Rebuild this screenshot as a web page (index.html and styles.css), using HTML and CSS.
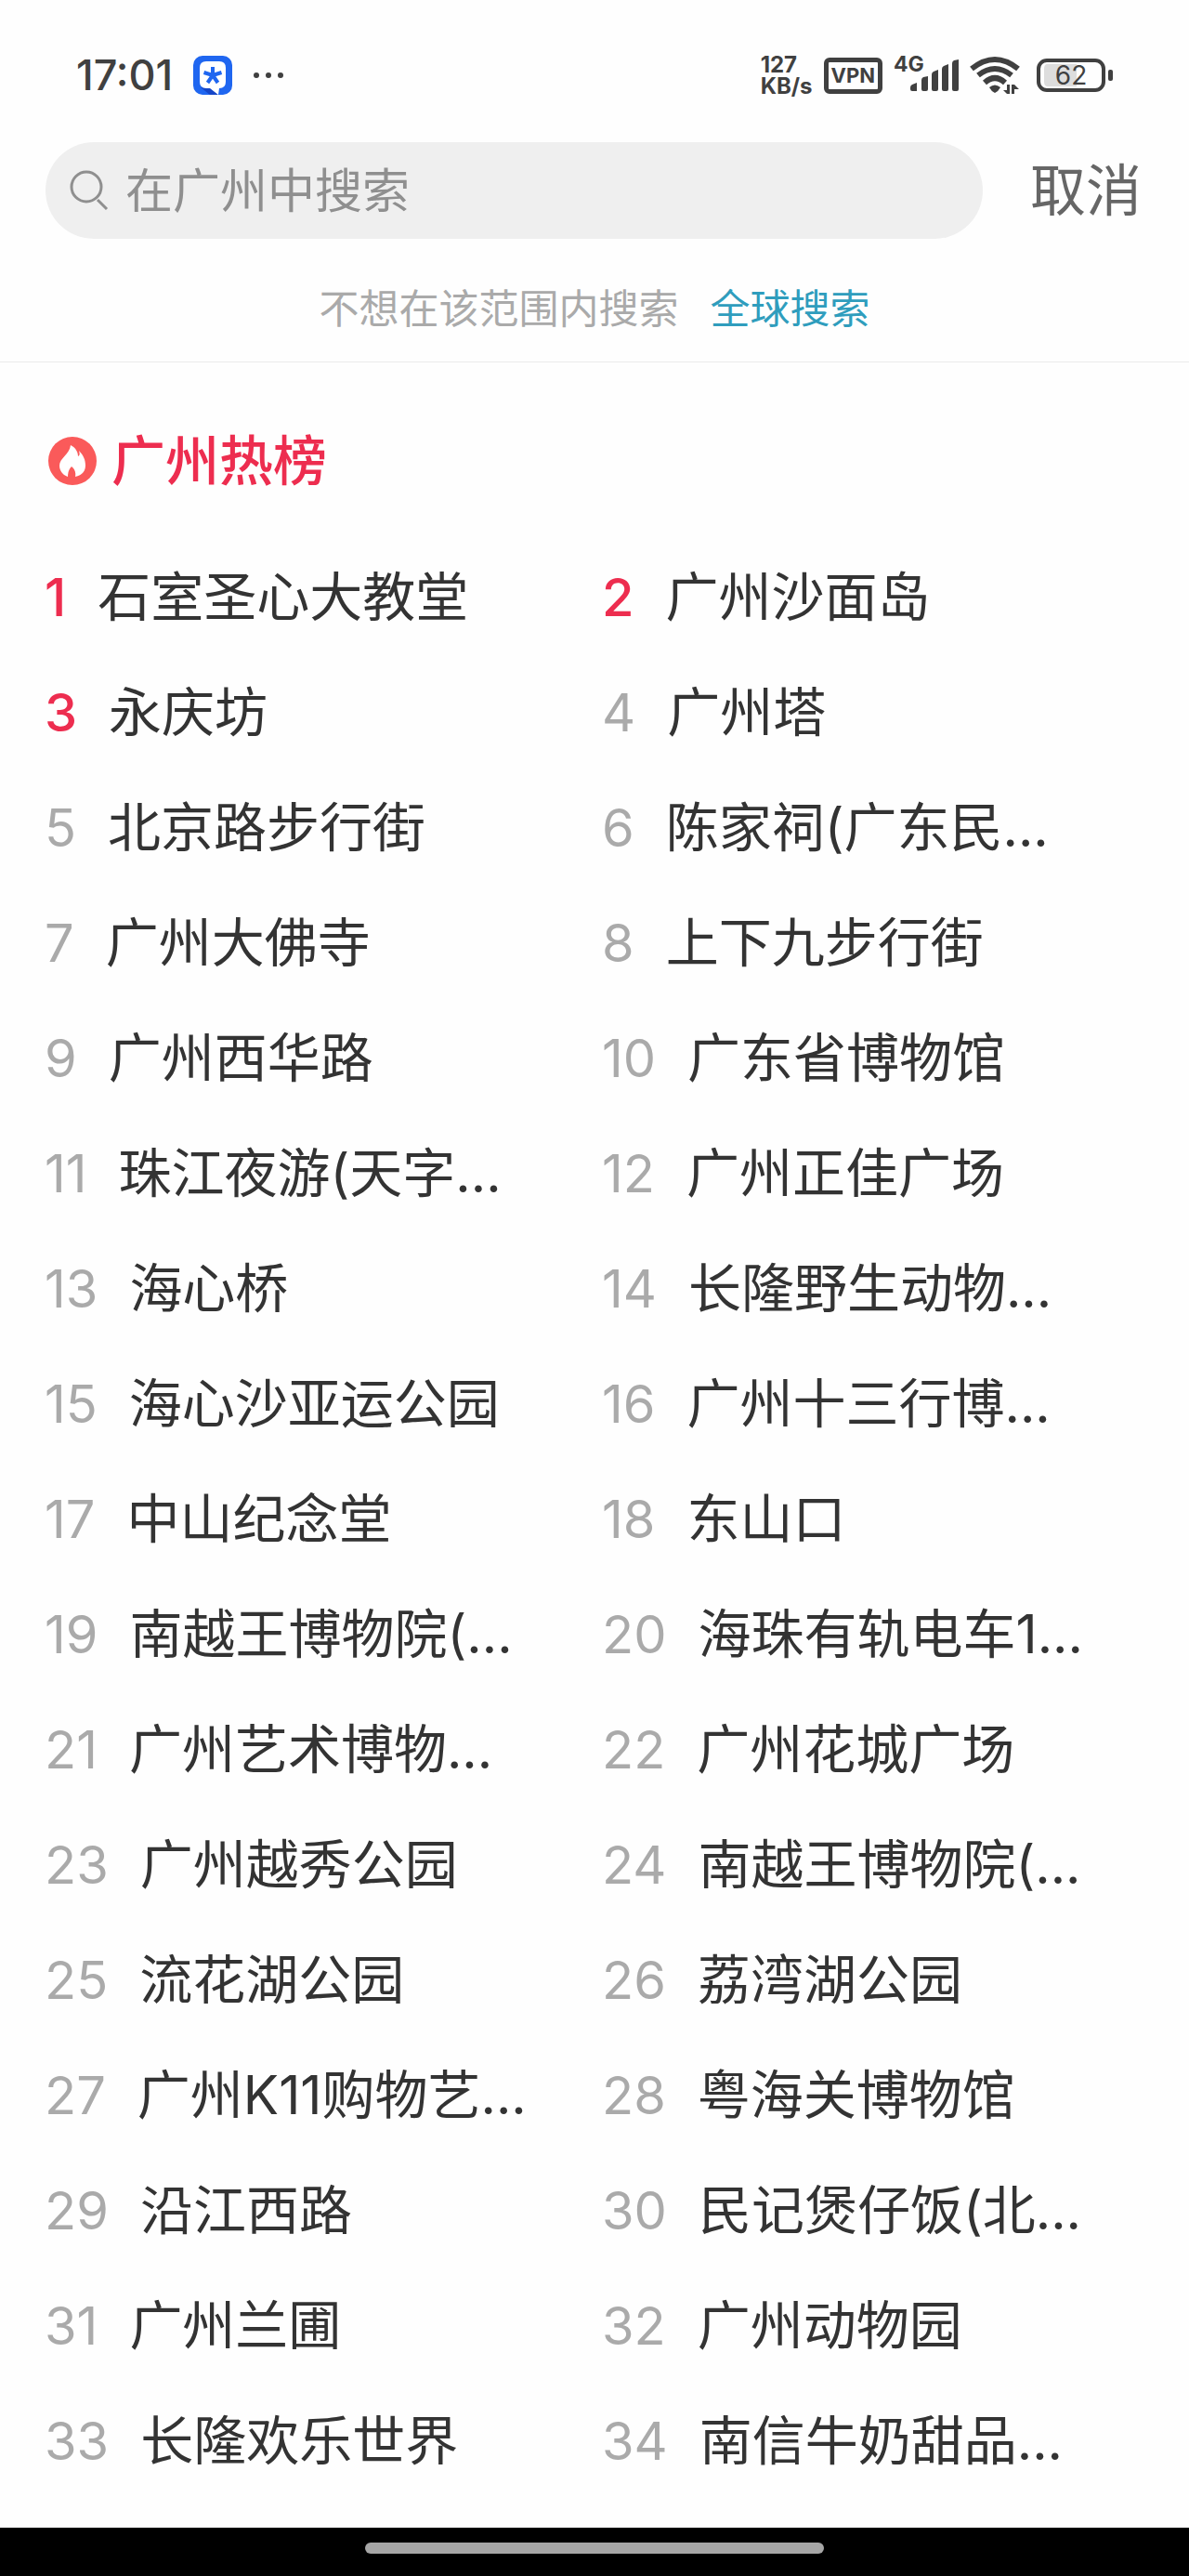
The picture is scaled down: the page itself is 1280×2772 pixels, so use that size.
FILE: index.html
```html
<!DOCTYPE html>
<html lang="zh-CN">
<head>
    <meta charset="UTF-8">
    <meta name="viewport" content="width=device-width, initial-scale=1.0">
    <title>广州热榜</title>
    <link rel="stylesheet" href="styles.css">
</head>
<body>
    <div class="status-bar">
        <div class="status-left">
            <span class="time">17:01</span>
            <svg class="app-icon" width="42" height="42" viewBox="0 0 42 42">
                <rect width="42" height="42" rx="10" fill="#1f66f0"/>
                <path d="M8 34 L20 35 L27 42 L18 42 Z" fill="#1546c8"/>
                <path d="M14 6 H28 Q35 6 35 13 V28 Q35 35 28 35 L27 42 L18 35 H14 Q7 35 7 28 V13 Q7 6 14 6 Z" fill="#fff"/>
                <path d="M21 21 V12 M21 21 L30.500 18 M21 21 L26.500 29 M21 21 L15.500 29 M21 21 L11.500 18" stroke="#1f66f0" stroke-width="4"/>
            </svg>
            <svg width="34" height="8" viewBox="0 0 34 8" fill="#404040">
                <circle cx="4" cy="4" r="3"/>
                <circle cx="17" cy="4" r="3"/>
                <circle cx="30" cy="4" r="3"/>
            </svg>
        </div>
        <div class="status-right">
            <div class="speed">
                <span>127</span>
                <span>KB/s</span>
            </div>
            <div class="vpn">VPN</div>
            <div class="signal">
                <span class="network">4G</span>
                <svg width="52" height="34" viewBox="0 0 52 34" fill="#404040">
                    <path d="M0 30 Q0 28 2 27 L7 25 V34 H2 Q0 34 0 32 Z"/>
                    <path d="M12 22 Q12 20 14 19 L19 18 V32 Q19 34 17 34 H14 Q12 34 12 32 Z"/>
                    <path d="M23 16 Q23 14 25 13 L30 11 V32 Q30 34 28 34 H25 Q23 34 23 32 Z"/>
                    <path d="M34 10 Q34 8 36 7 L41 5 V32 Q41 34 39 34 H36 Q34 34 34 32 Z"/>
                    <path d="M45 4 Q45 2 47 1 L52 0 V32 Q52 34 50 34 H47 Q45 34 45 32 Z"/>
                </svg>
            </div>
            <svg width="54" height="42" viewBox="0 0 54 42">
                <g fill="none" stroke="#404040" stroke-width="6">
                    <path d="M2 14 Q27 -6 52 14"/>
                    <path d="M9 21 Q27 7 45 21"/>
                    <path d="M16 29 Q27 19 38 29"/>
                </g>
                <path d="M21 34 Q27 29 33 34 Q31 38 27 40 Q23 38 21 34 Z" fill="#404040"/>
                <path d="M43 31 V41 H40 L36 37 H40 V31 Z M45 41 V31 H48 L53 36 H48 V41 Z" fill="#404040"/>
            </svg>
            <div class="battery">62</div>
        </div>
    </div>

    <form class="search-row">
        <label class="search-box">
            <svg width="42" height="44" viewBox="0 0 42 44" fill="none" stroke="#8f8f8f" stroke-width="3">
                <circle cx="18" cy="18" r="16"/>
                <path d="M30 32 L40 42"/>
            </svg>
            <input type="text" placeholder="在广州中搜索" aria-label="在广州中搜索">
        </label>
        <button type="button" class="cancel">取消</button>
    </form>

    <div class="scope">
        <span>不想在该范围内搜索</span>
        <a href="#">全球搜索</a>
    </div>

    <main>
        <h2 class="title">
            <svg width="52" height="52" viewBox="0 0 52 52">
                <circle cx="26" cy="26" r="26" fill="#fa5a5a"/>
                <path d="M24 9 C30 12 32 17 32 21 C34 20 34 18 33 15 C38 20 40 25 40 31 C40 38 35 42 29 43 C30 38 28 34 25 32 C22 35 21 39 21 43 C15 41 12 36 12 31 C12 23 23 19 24 9 Z" fill="#fff"/>
            </svg>
            广州热榜
        </h2>
        <ol class="rank-list">
            <li><span class="num top">1</span><a href="#">石室圣心大教堂</a></li>
            <li><span class="num top">2</span><a href="#">广州沙面岛</a></li>
            <li><span class="num top">3</span><a href="#">永庆坊</a></li>
            <li><span class="num">4</span><a href="#">广州塔</a></li>
            <li><span class="num">5</span><a href="#">北京路步行街</a></li>
            <li><span class="num">6</span><a href="#">陈家祠(广东民...</a></li>
            <li><span class="num">7</span><a href="#">广州大佛寺</a></li>
            <li><span class="num">8</span><a href="#">上下九步行街</a></li>
            <li><span class="num">9</span><a href="#">广州西华路</a></li>
            <li><span class="num">10</span><a href="#">广东省博物馆</a></li>
            <li><span class="num">11</span><a href="#">珠江夜游(天字...</a></li>
            <li><span class="num">12</span><a href="#">广州正佳广场</a></li>
            <li><span class="num">13</span><a href="#">海心桥</a></li>
            <li><span class="num">14</span><a href="#">长隆野生动物...</a></li>
            <li><span class="num">15</span><a href="#">海心沙亚运公园</a></li>
            <li><span class="num">16</span><a href="#">广州十三行博...</a></li>
            <li><span class="num">17</span><a href="#">中山纪念堂</a></li>
            <li><span class="num">18</span><a href="#">东山口</a></li>
            <li><span class="num">19</span><a href="#">南越王博物院(...</a></li>
            <li><span class="num">20</span><a href="#">海珠有轨电车1...</a></li>
            <li><span class="num">21</span><a href="#">广州艺术博物...</a></li>
            <li><span class="num">22</span><a href="#">广州花城广场</a></li>
            <li><span class="num">23</span><a href="#">广州越秀公园</a></li>
            <li><span class="num">24</span><a href="#">南越王博物院(...</a></li>
            <li><span class="num">25</span><a href="#">流花湖公园</a></li>
            <li><span class="num">26</span><a href="#">荔湾湖公园</a></li>
            <li><span class="num">27</span><a href="#">广州K11购物艺...</a></li>
            <li><span class="num">28</span><a href="#">粤海关博物馆</a></li>
            <li><span class="num">29</span><a href="#">沿江西路</a></li>
            <li><span class="num">30</span><a href="#">民记煲仔饭(北...</a></li>
            <li><span class="num">31</span><a href="#">广州兰圃</a></li>
            <li><span class="num">32</span><a href="#">广州动物园</a></li>
            <li><span class="num">33</span><a href="#">长隆欢乐世界</a></li>
            <li><span class="num">34</span><a href="#">南信牛奶甜品...</a></li>
        </ol>
    </main>

    <div class="nav-bar">
        <div class="nav-handle"></div>
    </div>
</body>
</html>
```
FILE: styles.css
```css
* {
    box-sizing: border-box;
}
body {
    font-family: Inter, "Noto Sans CJK SC", sans-serif;
    margin: 0;
    min-height: 100vh;
    display: flex;
    flex-direction: column;
    background: #fefefe;
    color: #333;
}
a {
    color: inherit;
    text-decoration: none;
}
svg {
    display: block;
    flex-shrink: 0;
}

/* status bar */
.status-bar {
    display: flex;
    justify-content: space-between;
    padding: 60px 82px 51px 82px;
    color: #404040;
}
.status-left, .status-right {
    display: flex;
    align-items: center;
    height: 42px;
}
.status-left {
    gap: 22px;
}
.status-right {
    gap: 12px;
}
.time {
    font-size: 45px;
    font-weight: 500;
    line-height: 42px;
}
.speed {
    display: flex;
    flex-direction: column;
    font-size: 24px;
    font-weight: 700;
    line-height: 23px;
}
.vpn {
    border: 5px solid #404040;
    border-radius: 6px;
    height: 39px;
    padding: 0 3px;
    font-size: 22px;
    font-weight: 700;
    line-height: 29px;
}
.signal {
    position: relative;
    padding-left: 18px;
}
.network {
    position: absolute;
    top: -4px;
    left: 0;
    font-size: 23px;
    font-weight: 700;
    line-height: 18px;
}
.battery {
    position: relative;
    width: 74px;
    height: 36px;
    margin: 0 8px 0 6px;
    border: 4px solid #404040;
    border-radius: 11px;
    background: linear-gradient(90deg, #ddd 60%, transparent 60%) content-box;
    padding: 2px 4px;
    font-size: 28px;
    line-height: 24px;
    text-align: center;
}
.battery::after {
    content: "";
    position: absolute;
    right: -12px;
    top: 8px;
    width: 5px;
    height: 12px;
    border-radius: 2px;
    background: #404040;
}

/* search */
.search-row {
    display: flex;
    align-items: center;
    gap: 51px;
    padding: 0 51px 0 49px;
}
.search-box {
    flex: 1;
    min-width: 0;
    height: 104px;
    display: flex;
    align-items: center;
    gap: 18px;
    padding: 0 26px;
    border-radius: 52px;
    background: #efefef;
}
.search-box input {
    flex: 1;
    min-width: 0;
    border: none;
    outline: none;
    padding: 0;
    background: none;
    font-family: inherit;
    font-size: 51px;
    color: #333;
}
.search-box input::placeholder {
    color: #8f8f8f;
    opacity: 1;
}
.cancel {
    border: none;
    padding: 0;
    background: none;
    font-family: inherit;
    font-size: 60px;
    line-height: 72px;
    color: #666;
    cursor: pointer;
}
.scope {
    display: flex;
    justify-content: center;
    gap: 34px;
    padding: 47px 49px 29px;
    border-bottom: 1px solid #ebebeb;
    font-size: 43px;
    line-height: 56px;
    color: #aaa;
}
.scope a {
    color: #2f9dbd;
}

/* hot list */
.title {
    display: flex;
    align-items: center;
    gap: 16px;
    margin: 0;
    padding: 70px 52px 49px;
    font-size: 58px;
    font-weight: 500;
    line-height: 72px;
    color: #ed2d4f;
}
.rank-list {
    display: grid;
    grid-template-columns: 1fr 1fr;
    margin: 0;
    padding: 0 32px 0 48px;
    list-style: none;
}
.rank-list li {
    display: flex;
    align-items: baseline;
    gap: 34px;
    height: 124px;
    font-size: 57px;
    line-height: 124px;
    white-space: nowrap;
}
.num {
    font-size: 56px;
    color: #aaa;
}
.top {
    color: #ed2d4f;
    font-weight: 500;
}

.nav-bar {
    display: flex;
    justify-content: center;
    margin-top: auto;
    padding: 16px 0 24px;
    background: #000;
}
.nav-handle {
    width: 494px;
    height: 12px;
    border-radius: 6px;
    background: #a6a6a6;
}
```
